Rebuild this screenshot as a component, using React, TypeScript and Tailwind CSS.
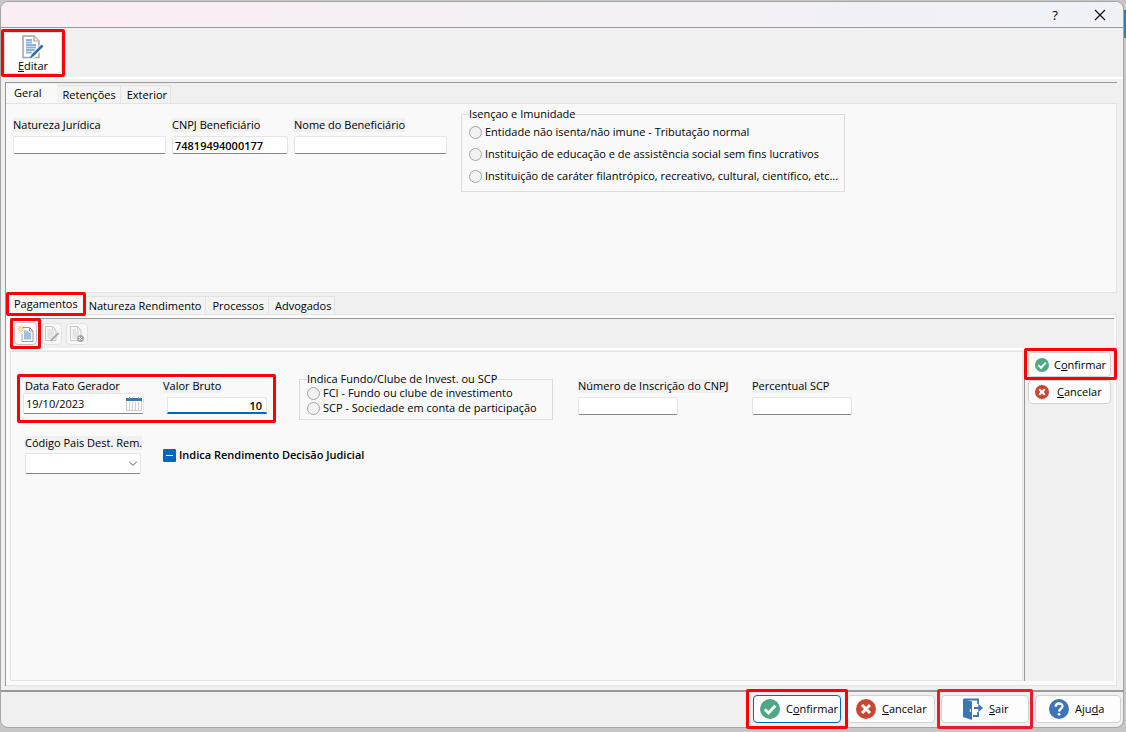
import { useState, type ReactNode } from 'react'

const LINE = 'border-[#e3e3e3]'

function Mark({ className }: { className: string }) {
  return <span aria-hidden="true" className={`pointer-events-none absolute z-10 rounded-xs border-3 ${className}`} />
}

function CheckIcon({ className }: { className: string }) {
  return (
    <svg viewBox="0 0 20 20" className={className} aria-hidden="true">
      <circle cx="10" cy="10" r="10" fill="#4fa883" />
      <path d="M4.8 10.2 8.6 14l6.8-7.4" fill="none" stroke="#fff" strokeWidth="2.9" />
    </svg>
  )
}

function CancelIcon({ className }: { className: string }) {
  return (
    <svg viewBox="0 0 20 20" className={className} aria-hidden="true">
      <circle cx="10" cy="10" r="10" fill="#cb4630" />
      <path d="m6 6 8 8m0-8-8 8" fill="none" stroke="#fff" strokeWidth="3" />
    </svg>
  )
}

function ExitIcon() {
  return (
    <svg viewBox="0 0 20 22" className="h-5.5 w-5 shrink-0" aria-hidden="true">
      <path d="M1 1.500h14V6M15 14v4H9" fill="none" stroke="#3b75b3" strokeWidth="1.800" />
      <path d="M0 .8 9 3.500V22L0 19z" fill="#3b75b3" />
      <path d="M9.500 3v16" stroke="#fff" />
      <path d="M7.300 11v3" stroke="#fff" />
      <path d="M11 9h4.300V5.800L20 10l-4.700 4.200V11H11z" fill="#3b75b3" />
    </svg>
  )
}

function HelpIcon() {
  return (
    <svg viewBox="0 0 20 20" className="size-5 shrink-0" aria-hidden="true">
      <circle cx="10" cy="10" r="10" fill="#3b75b3" />
      <path d="M6.700 7.800c0-4.300 6.800-4.300 6.800-.5 0 2.400-3.400 2.500-3.400 5.100" fill="none" stroke="#fff" strokeWidth="2.300" />
      <circle cx="10.100" cy="15.300" r="1.400" fill="#fff" />
    </svg>
  )
}

function EditIcon() {
  return (
    <svg viewBox="0 0 22 24" className="h-6 w-5.5" aria-hidden="true">
      <path d="M1 1h11l5 5v16.500H1z" fill="#fff" stroke="#a3a3a3" strokeWidth="1.500" />
      <path d="M12 1v5h5" fill="#eee" stroke="#a3a3a3" strokeWidth="1.200" />
      <path d="M4 5h6M4 7.500h6M4 10h10M4 12.500h10M4 15h9M4 17.500h6" stroke="#8cb1da" strokeWidth="1.800" />
      <path d="M20.500 11 9.500 22" stroke="#fff" strokeWidth="5" />
      <path d="M20.500 10.500 10 21" stroke="#2f6db5" strokeWidth="2.600" />
      <path d="m8 23 1-3 2 2z" fill="#2f6db5" />
    </svg>
  )
}

function NewIcon() {
  return (
    <svg viewBox="0 0 18 18" className="size-4.5" aria-hidden="true">
      <path d="M6 2.500h6.500l3.500 3.500v10.500H5V9" fill="#fff" stroke="#9b9b9b" />
      <path d="M12.500 2.500V6H16" fill="none" stroke="#9b9b9b" />
      <path d="M7 5.500h4.500V7.500H14v7H7z" fill="#9dc0e6" />
      <path d="M4 .5v7M.5 4h7M1.500 1.500l5 5M6.500 1.500l-5 5" stroke="#efb45f" />
      <circle cx="4" cy="4" r="1.500" fill="#fbe3b8" />
    </svg>
  )
}

function DocIcon({ kind }: { kind: 'edit' | 'delete' }) {
  return (
    <svg viewBox="0 0 16 18" className="h-4.5 w-4" aria-hidden="true">
      <path d="M1.500 1.500h7l3.500 3.500v10.500H1.500z" fill="#f8f8f8" stroke="#c9c9c9" />
      <path d="M8.500 1.500V5H12M3.500 5h3.500M3.500 7h6.500M3.500 9h6.500M3.500 11h6M3.500 13h4" fill="none" stroke="#cfcfcf" />
      {kind === 'edit' ? (
        <path d="m14.500 8-8 8" stroke="#a9a9a9" strokeWidth="1.800" />
      ) : (
        <>
          <circle cx="11.500" cy="13.500" r="3.500" fill="#a9a9a9" />
          <path d="m10 12 3 3m0-3-3 3" stroke="#fff" />
        </>
      )}
    </svg>
  )
}

function CalendarIcon() {
  return (
    <svg viewBox="0 0 16 16" className="h-4 w-4" aria-hidden="true">
      <path d="M.5 3h15v11.500H.5z" fill="#fafafa" stroke="#cfcfcf" />
      <path d="M3.500 6v8M6.500 6v8M9.500 6v8M12.500 6v8" stroke="#d2d2d2" />
      <path d="M0 2h16v3H0z" fill="#3b75b3" />
      <path d="M3.500 1v2M12.500 1v2" stroke="#8a8a8a" />
    </svg>
  )
}

const INPUT = 'h-[18px] rounded-xs border border-[#e6e6e6] border-b-[#868686] bg-white px-0.5 outline-none'

interface FieldProps {
  id: string
  label: string
  className: string
  value?: string
}

function Field({ id, label, className, value = '' }: FieldProps) {
  return (
    <div className="flex flex-col items-start gap-1">
      <label htmlFor={id} className="bg-[#f0f0f0] whitespace-nowrap">{label}</label>
      <input id={id} defaultValue={value} className={`${INPUT} font-semibold ${className}`} />
    </div>
  )
}

function RadioOption({ name, label }: { name: string; label: string }) {
  return (
    <label className="flex items-center gap-[3px] whitespace-nowrap">
      <input
        type="radio"
        name={name}
        className="size-[13px] shrink-0 appearance-none rounded-full border border-[#a3a3a3] bg-[#f2f2f2] checked:border-4 checked:border-[#0067c0]"
      />
      {label}
    </label>
  )
}

interface TabsProps {
  items: string[]
  active: string
  onSelect: (t: string) => void
  activeClass: string
  marked?: boolean
}

function Tabs({ items, active, onSelect, activeClass, marked }: TabsProps) {
  return (
    <div role="tablist" className="flex items-end">
      {items.map((t) => (
        <button
          key={t}
          type="button"
          role="tab"
          aria-selected={t === active}
          onClick={() => onSelect(t)}
          className={
            t === active
              ? `relative h-[19px] bg-[#f9f9f9] pb-px pl-2 ${activeClass}`
              : `relative h-[18px] border-t border-r ${LINE} bg-[#f3f3f3] pr-1 pl-1.5 last:pr-[3px]`
          }
        >
          {t}
          {marked && t === items[0] && <Mark className="-top-[3px] left-0 h-6 w-20 border-[#ff0000]" />}
        </button>
      ))}
    </div>
  )
}

function PushButton({ children, className }: { children: ReactNode; className: string }) {
  return (
    <button type="button" className={`flex items-center rounded border bg-[#fdfdfd] ${className}`}>
      {children}
    </button>
  )
}

function Header() {
  return (
    <>
      <header className="flex h-[26px] items-center justify-end rounded-t-lg border-b border-[#999] bg-linear-to-r from-[#f9eef4] to-[#f0f1f8] pr-[11px]">
        <button type="button" className="w-8 text-[13px] font-medium" aria-label="Ajuda">?</button>
        <button type="button" className="ml-[17px] flex w-6 justify-center" aria-label="Fechar">
          <svg viewBox="0 0 12 12" className="size-3">
            <path d="m1 1 10 10M11 1 1 11" stroke="#111" strokeWidth="1.200" />
          </svg>
        </button>
      </header>
      <div className="flex h-[51px] items-center border-b-2 border-white pl-[3px]">
        <button
          type="button"
          className="relative flex h-[42px] w-[58px] flex-col items-center justify-end rounded border border-[#ddd] bg-[#fdfdfd]"
        >
          <EditIcon />
          <span><u>E</u>ditar</span>
          <Mark className="-inset-1 border-[#ff0000]" />
        </button>
      </div>
    </>
  )
}

function GeneralPanel() {
  return (
    <div className={`flex min-h-[190px] items-start border-y border-r ${LINE} bg-[#f9f9f9] pl-[7px]`}>
      <div className="flex gap-1.5 pt-[14px]">
        <Field id="natureza" label="Natureza Jurídica" className="w-[153px]" />
        <Field id="cnpj" label="CNPJ Beneficiário" className="w-[116px]" value="74819494000177" />
        <Field id="nome" label="Nome do Beneficiário" className="w-[153px]" />
      </div>
      <fieldset className="mt-[3px] ml-[14px] flex flex-col gap-2 border border-[#dcdcdc] pt-1 pr-1.5 pb-2 pl-[7px]">
        <legend>Isençao e Imunidade</legend>
        <RadioOption name="isencao" label="Entidade não isenta/não imune - Tributação normal" />
        <RadioOption name="isencao" label="Instituição de educação e de assistência social sem fins lucrativos" />
        <RadioOption name="isencao" label="Instituição de caráter filantrópico, recreativo, cultural, científico, etc..." />
      </fieldset>
    </div>
  )
}

function PaymentForm() {
  return (
    <div className={`flex-1 border ${LINE} bg-[#f9f9f9] pt-5 pl-3`}>
      <div className="flex items-start">
        <div className="relative flex w-[276px] pt-[7px] pl-0.5">
          <div className="flex w-[138px] flex-col items-start">
            <label htmlFor="data" className="bg-[#f0f0f0]">Data Fato Gerador</label>
            <div className="-ml-0.5 flex h-[21px] w-[121px] items-center rounded-xs border border-[#e6e6e6] border-b-[#868686] bg-white pr-px pl-0.5">
              <input id="data" defaultValue="19/10/2023" className="min-w-0 flex-1 outline-none" />
              <button type="button" aria-label="Abrir calendário"><CalendarIcon /></button>
            </div>
          </div>
          <div className="flex flex-col items-start gap-1">
            <label htmlFor="valor" className="bg-[#f0f0f0]">Valor Bruto</label>
            <input
              id="valor"
              defaultValue="10"
              className="ml-1 h-[17px] w-[100px] border border-[#e6e6e6] border-b-2 border-b-[#0067c0] bg-white pr-1 text-right font-semibold outline-none"
            />
          </div>
          <Mark className="-left-1.5 top-0.5 h-[49px] w-[259px] border-[#ff0000]" />
        </div>
        <fieldset className="flex w-[254px] flex-col gap-px border border-[#dcdcdc] pb-1 pl-[7px]">
          <legend>Indica Fundo/Clube de Invest. ou SCP</legend>
          <RadioOption name="fundo" label="FCI - Fundo ou clube de investimento" />
          <RadioOption name="fundo" label="SCP - Sociedade em conta de participação" />
        </fieldset>
        <div className="flex pt-[7px] pl-[25px]">
          <div className="w-[174px]">
            <Field id="inscricao" label="Número de Inscrição do CNPJ" className="w-[100px]" />
          </div>
          <Field id="percentual" label="Percentual SCP" className="w-[100px]" />
        </div>
      </div>
      <div className="mt-4 flex pl-0.5">
        <div className="flex w-[138px] flex-col items-start gap-[3px]">
          <label htmlFor="pais" className="bg-[#f0f0f0] whitespace-nowrap">Código Pais Dest. Rem.</label>
          <div className="relative">
            <select
              id="pais"
              className="h-[21px] w-[116px] appearance-none rounded-xs border border-[#e6e6e6] border-b-[#868686] bg-white pl-1 outline-none"
            >
              <option />
            </select>
            <svg viewBox="0 0 8 5" className="pointer-events-none absolute top-2 right-1 h-[5px] w-2">
              <path d="m0 .5 4 4 4-4" fill="none" stroke="#555" />
            </svg>
          </div>
        </div>
        <label className="flex items-center gap-[3px] self-start pt-3 font-semibold">
          <span className="relative flex">
            <input type="checkbox" className="size-[13px] appearance-none rounded-[1px] bg-[#0067c0]" />
            <span className="pointer-events-none absolute inset-x-[3px] top-1.5 h-px bg-white" />
          </span>
          Indica Rendimento Decisão Judicial
        </label>
      </div>
    </div>
  )
}

function PaymentsPanel() {
  return (
    <div className={`flex flex-1 flex-col border-y border-r ${LINE} bg-[#fbfbfb] pt-[3px] pr-0.5 pb-1 pl-1`}>
      <div className="flex h-8 items-center gap-1 border-t border-b-2 border-t-[#999] border-b-white bg-[#f0f0f0] pl-1">
        <button
          type="button"
          aria-label="Novo"
          className="relative mr-px flex size-[23px] items-center justify-center rounded border border-[#c4c4c4] bg-[#fdfdfd]"
        >
          <NewIcon />
          <Mark className="-inset-[5px] border-[#ff0000]" />
        </button>
        <button type="button" aria-label="Alterar" className="flex h-[22px] w-5 items-center justify-center rounded border border-[#e3e3e3] bg-[#f7f7f7]">
          <DocIcon kind="edit" />
        </button>
        <button type="button" aria-label="Excluir" className="flex size-[22px] items-center justify-center rounded border border-[#e3e3e3] bg-[#f7f7f7]">
          <DocIcon kind="delete" />
        </button>
      </div>
      <div className="flex flex-1 bg-[#f0f0f0]">
        <div className="flex flex-1 flex-col pt-px">
          <PaymentForm />
        </div>
        <div className="ml-px flex w-[90px] flex-col gap-[3px] border-l border-[#999] pt-0.5 pl-[3px]">
          <div className="relative">
            <PushButton className="h-[25px] w-[83px] gap-[5px] border-[#d2d2d2] pl-1.5">
              <CheckIcon className="size-3.5 shrink-0" />
              <span>C<u>o</u>nfirmar</span>
            </PushButton>
            <Mark className="-top-1 -left-1 h-8 w-[93px] border-[#ff0000]" />
          </div>
          <PushButton className="h-6 w-[83px] gap-2 border-[#d2d2d2] pl-1.5">
            <CancelIcon className="size-3.5 shrink-0" />
            <span><u>C</u>ancelar</span>
          </PushButton>
        </div>
      </div>
    </div>
  )
}

function Footer() {
  return (
    <footer className="flex h-[37px] items-center justify-end gap-1.5 border-t-2 border-[#999] pr-0.5 pb-0.5">
      <div className="relative">
        <PushButton className="h-7 w-[88px] gap-1.5 border-[#0067c0] pl-1.5">
          <CheckIcon className="size-5 shrink-0" />
          <span>C<u>o</u>nfirmar</span>
        </PushButton>
        <Mark className="-inset-x-[7px] -inset-y-[6px] border-[#ff0000]" />
      </div>
      <PushButton className="h-7 w-[88px] gap-1.5 border-[#d2d2d2] pl-2">
        <CancelIcon className="size-5 shrink-0" />
        <span><u>C</u>ancelar</span>
      </PushButton>
      <div className="relative">
        <PushButton className="h-7 w-[88px] gap-1.5 border-[#d2d2d2] pl-[21px]">
          <ExitIcon />
          <span><u>S</u>air</span>
        </PushButton>
        <Mark className="-inset-x-[4px] -inset-y-[6px] border-[#ed1c24]" />
      </div>
      <PushButton className="h-7 w-[86px] gap-1.5 border-[#d2d2d2] pl-[13px]">
        <HelpIcon />
        <span>Aju<u>d</u>a</span>
      </PushButton>
    </footer>
  )
}

export default function App() {
  const [topTab, setTopTab] = useState('Geral')
  const [bottomTab, setBottomTab] = useState('Pagamentos')
  return (
    <div className="relative flex min-h-screen flex-col bg-[#c6c6c6] pt-px pr-0.5 pb-1 font-['Open_Sans','Noto_Sans',sans-serif] text-[11px] leading-[14px] text-black">
      <span className="absolute top-2.5 right-0 h-7 w-1 bg-[#2f7fae]" />
      <span className="absolute top-2.5 left-0 h-7 w-1 bg-[#3c78a5]" />
      <div className="relative flex flex-1 flex-col rounded-lg border border-[#a6a6a6] bg-[#f0f0f0]">
        <Header />
        <main className="mt-[3px] mr-1.5 mb-1 ml-1 flex flex-1 flex-col border-t border-l border-[#999]">
          <div className="pt-px">
            <Tabs items={['Geral', 'Retenções', 'Exterior']} active={topTab} onSelect={setTopTab} activeClass="pr-[15px]" />
          </div>
          <GeneralPanel />
          <div className="pt-0.5">
            <Tabs
              items={['Pagamentos', 'Natureza Rendimento', 'Processos', 'Advogados']}
              active={bottomTab}
              onSelect={setBottomTab}
              activeClass="pr-[5px]"
              marked
            />
          </div>
          <PaymentsPanel />
        </main>
        <Footer />
      </div>
    </div>
  )
}
